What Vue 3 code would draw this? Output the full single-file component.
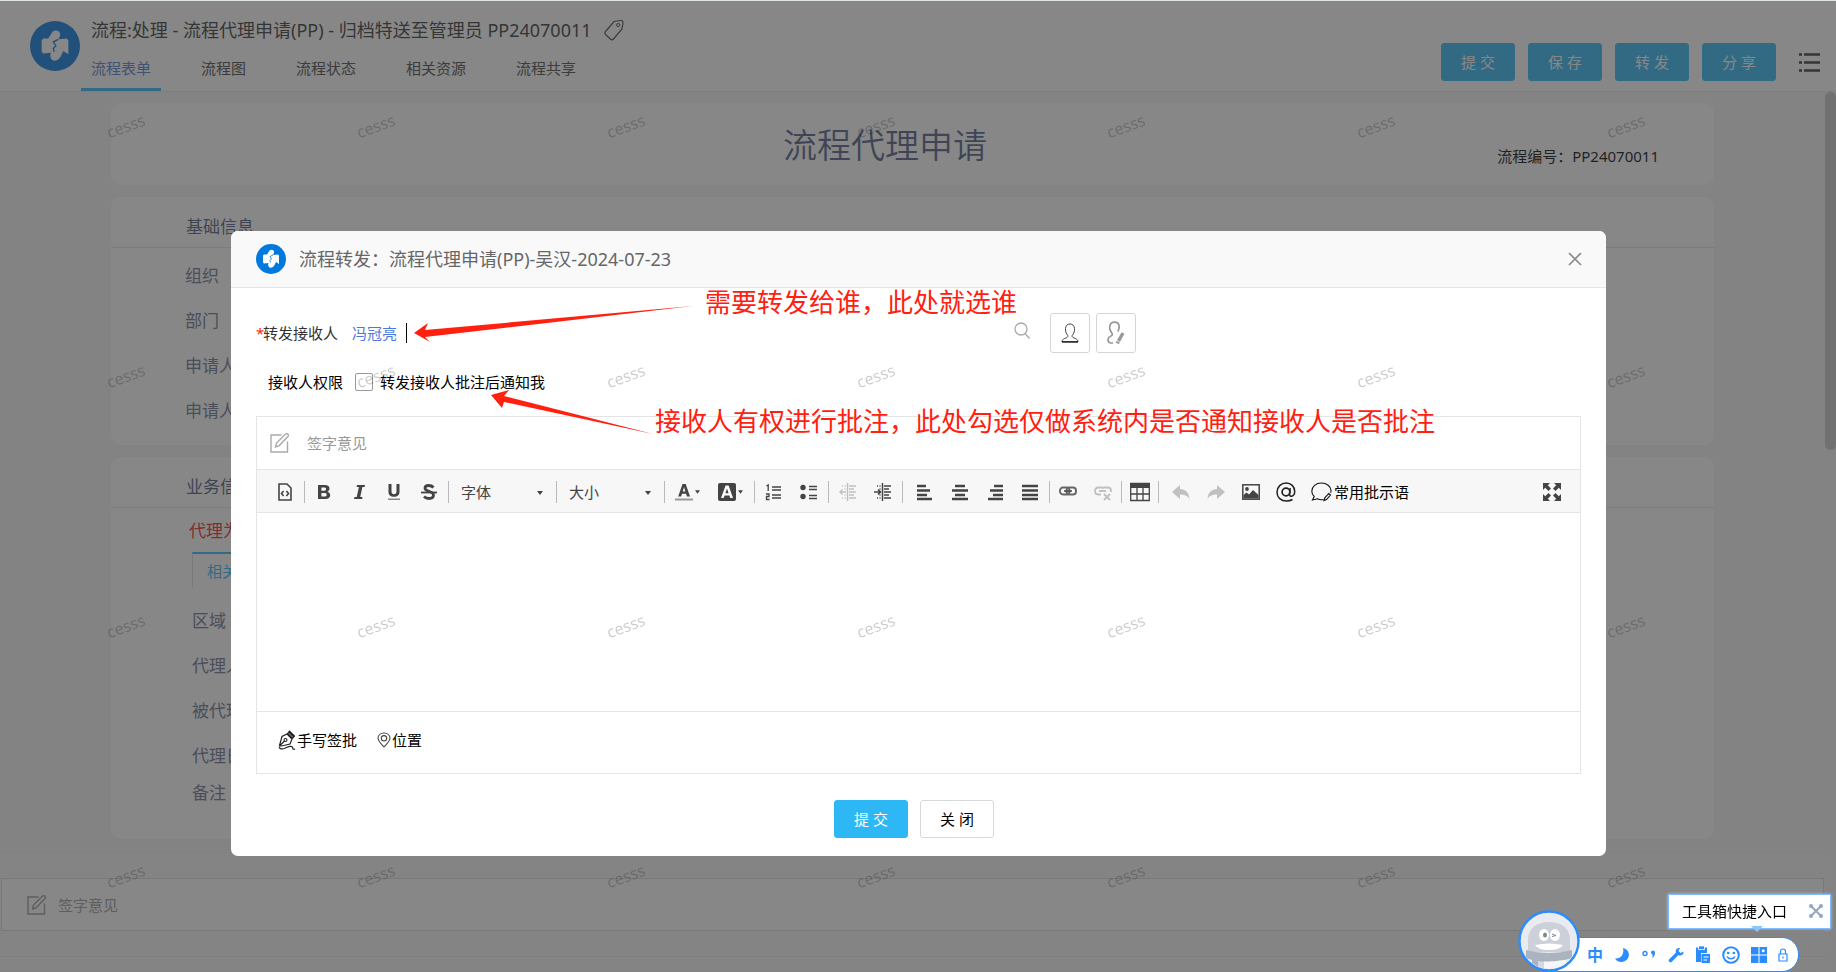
<script setup>
import { ref } from 'vue'

const tabs = ['流程表单', '流程图', '流程状态', '相关资源', '流程共享']
const activeTab = ref('流程表单')
const actions = ['提 交', '保 存', '转 发', '分 享']
const basicFields = ['组织', '部门', '申请人', '申请人']
const businessFields = ['区域', '代理人', '被代理人', '代理日期', '备注']
const notify = ref(false)
const opinion = ref('')
const recipient = ref('')
const watermarks = Array.from({ length: 28 }, (_, i) => i)

const groups = [
  { items: ['source'] },
  { items: ['bold', 'italic', 'underline', 'strike'] },
  { select: '字体' },
  { select: '大小' },
  { items: ['color', 'bgcolor'], drop: true },
  { items: ['ol', 'ul'] },
  { items: ['outdent', 'indent'] },
  { items: ['left', 'center', 'right', 'justify'], wide: true },
  { items: ['link', 'unlink'], tight: true },
  { items: ['table'], tight: true },
  { items: ['undo', 'redo', 'image', 'at'], last: true },
]
const faded = ['outdent', 'unlink', 'undo', 'redo']
const names = {
  source: '源码', bold: '加粗', italic: '倾斜', underline: '下划线', strike: '删除线',
  color: '文本颜色', bgcolor: '背景颜色', ol: '编号列表', ul: '项目列表', outdent: '减少缩进',
  indent: '增加缩进', left: '左对齐', center: '居中', right: '右对齐', justify: '两端对齐',
  link: '超链接', unlink: '取消链接', table: '表格', undo: '撤销', redo: '重做', image: '图像', at: '提到',
}
const icons = {
  source: '<path d="M3 1h8l4 4v12H3z" fill="none" stroke="currentColor" stroke-width="1.6"/><path d="M7.600 8L5.500 10.500l2.100 2.500M10.400 8l2.100 2.500-2.100 2.500" fill="none" stroke="currentColor" stroke-width="1.600"/>',
  bold: '<path fill="currentColor" fill-rule="evenodd" d="M3 2h7c3 0 4.500 1.500 4.500 3.500 0 1.600-.9 2.700-2.200 3.200 1.700.4 2.900 1.600 2.900 3.500 0 2.400-1.800 3.800-4.700 3.800H3zM6.400 4.500v3.200h2.800c1.200 0 1.900-.6 1.900-1.600s-.7-1.600-1.900-1.600zM6.400 10v3.500h3.200c1.300 0 2.100-.6 2.100-1.800S10.900 10 9.600 10z"/>',
  italic: '<path fill="currentColor" d="M7 2h8l-.4 2h-2.200l-2.200 10h2.300l-.4 2H4l.4-2h2.300L8.900 4H6.600z"/>',
  underline: '<path fill="currentColor" d="M3.500 1h3v7.500c0 1.800.9 2.800 2.500 2.800s2.500-1 2.500-2.800V1h3v7.700c0 3.300-2 5.100-5.500 5.100S3.500 12 3.500 8.700z"/><path fill="#888" d="M3 15.500h12V17H3z"/>',
  strike: '<path d="M13.500 4.500C12 2.800 10.500 2.500 8.800 2.500c-2.300 0-3.800 1-3.800 2.800C5 9 13.500 7.500 13.500 12c0 2.200-1.800 3.500-4.500 3.500-2 0-3.700-.6-5-2" fill="none" stroke="currentColor" stroke-width="2.800"/><path fill="currentColor" d="M1 8.600h16v1.800H1z"/>',
  color: '<path fill="currentColor" fill-rule="evenodd" d="M7.500 1h3.200L15 13.500h-3l-.9-2.700H7l-.9 2.700H3.200zM9 4L7.700 8.500h2.700z"/><path fill="#999" d="M0 15.500h18v2H0z"/>',
  bgcolor: '<rect x="0" y="0" width="18" height="18" rx="2" fill="currentColor"/><path fill="#fff" fill-rule="evenodd" d="M7.600 2.500h3L15 15h-2.700l-.9-2.600H6.600L5.700 15H3zM9 5.500l-1.600 4.800h3.200z"/>',
  ol: '<path d="M7 4h9M7 7h9M7 12h9M7 15h9" stroke="currentColor" stroke-width="1.400"/><path d="M1.500 3l1.700-1V8M1 11h3v2.500H1.500V16.500H4.500" fill="none" stroke="currentColor" stroke-width="1.300"/>',
  ul: '<circle cx="3" cy="4.500" r="2.700" fill="currentColor"/><circle cx="3" cy="13.500" r="2.700" fill="currentColor"/><path d="M9 3.500h8M9 6.500h8M9 12.500h8M9 15.500h8" stroke="currentColor" stroke-width="1.400"/>',
  outdent: '<path d="M8.500 0v18" stroke="currentColor" stroke-width="1.500"/><path d="M10 3h7M10 6h5M10 9h7M10 12h5M10 15h7" stroke="currentColor" stroke-width="1.300"/><path d="M3 3h1M5.500 3h1M3 15h1M5.500 15h1M5.500 6h1M5.500 12h1" stroke="currentColor" stroke-width="1.300"/><path d="M7 9H1M3.500 6.500L1 9l2.500 2.500" fill="none" stroke="currentColor" stroke-width="1.400"/>',
  indent: '<path d="M8.500 0v18" stroke="currentColor" stroke-width="1.500"/><path d="M10 3h7M10 6h5M10 9h7M10 12h5M10 15h7" stroke="currentColor" stroke-width="1.500"/><path d="M3 3h1M5.500 3h1M3 15h1M5.500 15h1M5.500 6h1M5.500 12h1" stroke="currentColor" stroke-width="1.300"/><path d="M0 9h6M4 6.500L6.500 9 4 11.500" fill="none" stroke="currentColor" stroke-width="1.600"/>',
  left: '<path d="M1 3h9M1 7.500h13M1 12h10M1 16h15" stroke="currentColor" stroke-width="2.600"/>',
  center: '<path d="M4 3h10M1 7.500h16M4 12h10M1 16h16" stroke="currentColor" stroke-width="2.600"/>',
  right: '<path d="M8 3h9M4 7.500h13M7 12h10M2 16h15" stroke="currentColor" stroke-width="2.600"/>',
  justify: '<path d="M1 3h16M1 7.500h16M1 12h16M1 16h16" stroke="currentColor" stroke-width="2.600"/>',
  link: '<rect x="1" y="4.500" width="9.500" height="7" rx="3" fill="none" stroke="#666" stroke-width="1.900"/><rect x="7.500" y="4.500" width="9.500" height="7" rx="3" fill="none" stroke="#666" stroke-width="1.900"/><path d="M5 8h8" stroke="currentColor" stroke-width="1.500"/>',
  unlink: '<path d="M10 5.500C9.500 4.500 8.500 4.500 7.500 4.500H4C2 4.500 1 6 1 8s1 3.500 3 3.500h3M8 5c.5-.5 1.500-.5 2.500-.5H14c2 0 3 1.500 3 3.500v1M5 8h7" fill="none" stroke="currentColor" stroke-width="1.800"/><path d="M10 11l6 6M16 11l-6 6" stroke="currentColor" stroke-width="2"/>',
  table: '<path d="M-1 0h20v5H-1z" fill="currentColor"/><path d="M-.3.500h18.600v17H-.3zM-.3 11h18.600M6 5v12.500M12 5v12.500" fill="none" stroke="currentColor" stroke-width="1.300"/>',
  undo: '<path fill="currentColor" d="M0 9l8-7v4c5 .3 9 3 9.500 10C15.500 12.500 12 11.500 8 11.500V16z"/>',
  redo: '<path fill="currentColor" d="M18 9l-8-7v4C5 6.300 1 9 .5 16 2.500 12.500 6 11.500 10 11.500V16z"/>',
  image: '<rect x=".8" y="1.800" width="16.400" height="14.400" fill="none" stroke="currentColor" stroke-width="1.500"/><circle cx="5" cy="6" r="1.900" fill="currentColor"/><path fill="currentColor" d="M1.500 15.500v-3.500l3-2.500 2.500 2 4-4.500 5.500 5v3.500z"/>',
  at: '<circle cx="9" cy="9" r="3.900" fill="none" stroke="#222" stroke-width="1.700"/><path d="M13.200 5l-.7 6c0 1.800 1 2.500 2.200 2.200C16.500 12.700 17.700 11 17.700 8.500 17.700 3.500 14 0 9.300 0 4 0 0 4 0 9.200 0 14.500 4 18 9.500 18c2.500 0 4.500-.6 6-1.500" fill="none" stroke="#222" stroke-width="1.500"/>',
}
</script>

<template>
  <div class="page">
    <header class="head">
      <svg class="logo big" viewBox="0 0 30 30" aria-hidden="true">
        <circle cx="15" cy="15" r="15" fill="#0079de" />
        <path fill="#fff" d="M7 11.500l1-1h3l2.500-4q2-1.500 4 0 1.500 1.500-.5 4.500l5-.5 1 1V20l-3-2-2 4q-2 2.500-4.500 1.500-2-1.500-1-4.500l-4.500.5-1-1z" />
        <path d="M17 11l-3 1.500 1.500 2.500-1.500 1.500.5 2" fill="none" stroke="#0079de" stroke-width=".8" />
      </svg>
      <div class="head-main">
        <h1>
          流程:处理 - 流程代理申请(PP) - 归档特送至管理员 PP24070011
          <svg class="tag" viewBox="0 0 20 22" aria-hidden="true">
            <path d="M1.500 12.500L10 2.500 16.500 1.500q2.500-.3 2.500 2L18 10l-8.500 10q-1.300 1.500-2.800.2L1.500 15.500q-1.400-1.400 0-3z" fill="none" stroke="#444" stroke-width="1.200" />
            <circle cx="14.200" cy="6" r="1.600" fill="none" stroke="#444" />
          </svg>
        </h1>
        <nav>
          <a v-for="t in tabs" :key="t" href="#" :class="{ on: t === activeTab }" @click.prevent="activeTab = t">{{ t }}</a>
        </nav>
      </div>
      <div class="head-actions">
        <button v-for="a in actions" :key="a" type="button" class="btn primary">{{ a }}</button>
        <button type="button" class="plain menu" aria-label="更多">
          <svg viewBox="0 0 21 19" width="21" height="19"><path d="M5 1.500h16M5 9.500h16M5 17.500h16" stroke="#333" stroke-width="2.600" /><path d="M0 1.500h3M0 9.500h3M0 17.500h3" stroke="#333" stroke-width="2.600" /></svg>
        </button>
      </div>
    </header>

    <div class="body">
      <div class="content">
        <main>
          <section class="card title-card">
            <h2>流程代理申请</h2>
            <p>流程编号：PP24070011</p>
          </section>
          <section class="card">
            <h3>基础信息</h3>
            <div class="rows basic">
              <div v-for="(f, i) in basicFields" :key="i" class="row">{{ f }}</div>
            </div>
          </section>
          <section class="card">
            <h3>业务信息</h3>
            <p class="warn">代理为</p>
            <div class="subtab">相关</div>
            <div class="rows business">
              <div v-for="f in businessFields" :key="f" class="row">{{ f }}</div>
            </div>
          </section>
        </main>
        <footer class="sign-area">
          <div class="sign">
            <svg viewBox="0 0 19 20" width="19" height="20" aria-hidden="true"><path d="M11.500 2H1v17h16.500V8.500" fill="none" stroke="#999" stroke-width="1.400" /><path d="M5.500 14l1-4L15.500 1q1.500-.8 2.500.3t0 2.200L9 12.800z" fill="none" stroke="#999" stroke-width="1.400" /></svg>
            <span>签字意见</span>
          </div>
        </footer>
      </div>
      <div class="scroll"><i></i></div>
    </div>

    <div class="mask">
      <section class="modal" role="dialog" aria-labelledby="dlg-title">
        <header class="modal-head">
          <svg class="logo" viewBox="0 0 30 30" aria-hidden="true">
            <circle cx="15" cy="15" r="15" fill="#0079de" />
            <path fill="#fff" d="M7 11.500l1-1h3l2.500-4q2-1.500 4 0 1.500 1.500-.5 4.500l5-.5 1 1V20l-3-2-2 4q-2 2.500-4.500 1.500-2-1.500-1-4.500l-4.500.5-1-1z" />
            <path d="M17 11l-3 1.500 1.500 2.500-1.500 1.500.5 2" fill="none" stroke="#0079de" stroke-width=".8" />
          </svg>
          <h2 id="dlg-title">流程转发：流程代理申请(PP)-吴汉-2024-07-23</h2>
          <button type="button" class="plain" aria-label="关闭">
            <svg viewBox="0 0 14 14" width="14" height="14"><path d="M1 1l12 12M13 1L1 13" stroke="#8a8a8a" stroke-width="1.700" /></svg>
          </button>
        </header>

        <div class="modal-body">
          <div class="recipient">
            <label for="rcp"><b>*</b>转发接收人</label>
            <div class="picker">
              <a href="#" @click.prevent>冯冠亮</a>
              <i class="caret"></i>
              <input id="rcp" v-model="recipient" type="text" />
              <svg viewBox="0 0 16 20" width="16" height="20" aria-hidden="true"><circle cx="7" cy="6" r="6" fill="none" stroke="#aaa" stroke-width="1.300" /><path d="M11 10.500l4.500 5" stroke="#aaa" stroke-width="1.300" /></svg>
            </div>
            <button type="button" class="square" aria-label="选择人员">
              <svg viewBox="0 0 18 20" width="18" height="20"><path d="M6.800 12.500C5 10.500 4.300 8 4.500 5.500 4.700 2.500 6.500 1 9 1s4.300 1.500 4.500 4.500c.2 2.500-.5 5-2.300 7-.5 2 1.500 2.300 3.500 3.200 1.500.7 2.300 1.500 2.300 3.300H1c0-1.800.8-2.600 2.300-3.300 2-.9 4-1.200 3.500-3.200z" fill="none" stroke="#444" stroke-width="1" /><path d="M1 18.800h16" stroke="#222" stroke-width="1.400" /></svg>
            </button>
            <button type="button" class="square" aria-label="编辑人员">
              <svg viewBox="0 0 20 24" width="20" height="24"><path d="M7 22H4.500Q2 21.500 2 18.500c0-1.500 1-2.500 2.500-3.200 2-1 2.500-2 1-3.800C4 9.500 3.300 7.500 3.700 5.300 4.200 2.500 6 1.200 8.500 1.200s4.500 1.500 4.700 4.300c.1 2-.5 3.500-1.400 5" fill="none" stroke="#999" stroke-width="1.700" /><path d="M12.500 20l4.500-8M11.500 22.500l.5-2" stroke="#999" stroke-width="3.400" /></svg>
            </button>
          </div>

          <div class="rights">
            <span>接收人权限</span>
            <input id="ntf" v-model="notify" type="checkbox" />
            <label for="ntf">转发接收人批注后通知我</label>
          </div>

          <div class="editor">
            <div class="editor-head">
              <svg viewBox="0 0 19 20" width="19" height="20" aria-hidden="true"><path d="M11.500 2H1v17h16.500V8.500" fill="none" stroke="#aaa" stroke-width="1.400" /><path d="M5.500 14l1-4L15.500 1q1.500-.8 2.500.3t0 2.200L9 12.800z" fill="none" stroke="#aaa" stroke-width="1.400" /></svg>
              <label for="op">签字意见</label>
            </div>
            <div class="toolbar">
              <div v-for="(g, gi) in groups" :key="gi" class="group" :class="{ wide: g.wide, tight: g.tight, last: g.last }">
                <div v-if="g.select" class="sel">
                  <select :aria-label="g.select"><option>{{ g.select }}</option></select>
                  <svg viewBox="0 0 6 4" width="6" height="4" aria-hidden="true"><path d="M0 0h6L3 4z" fill="#444" /></svg>
                </div>
                <template v-else>
                  <button v-for="n in g.items" :key="n" type="button" class="tool" :class="{ drop: g.drop, faded: faded.includes(n) }" :aria-label="names[n]">
                    <svg :viewBox="n === 'at' ? '-1 -1 20 20' : '0 0 18 18'" :width="n === 'at' ? 20 : 18" :height="n === 'at' ? 20 : 18" v-html="icons[n]"></svg>
                    <svg v-if="g.drop" viewBox="0 0 6 4" width="5" height="4"><path d="M0 0h6L3 4z" fill="#444" /></svg>
                  </button>
                </template>
              </div>
              <button type="button" class="phrase">
                <svg viewBox="0 0 21 20" width="21" height="20"><path d="M12.500 17.500c-2 .5-4 .3-6-.7L1.500 18l1.700-3.500C1.500 12.800.8 11 .8 9.300.8 4.500 5 1 10.300 1S20 4.500 20 8.500c0 .8-.1 1.500-.4 2.200" fill="none" stroke="#111" stroke-width="1.100" /><path d="M13 18.500l.8-2.700 4-4.300 1.700 1.500-4 4.500z" fill="none" stroke="#111" stroke-width="1.100" /></svg>
                常用批示语
              </button>
              <button type="button" class="full" aria-label="全屏">
                <svg viewBox="0 0 18 18" width="18" height="18"><path fill="#444" d="M0 0h7L4.800 2.200 8 5.500 5.500 8 2.200 4.800 0 7zM18 0v7l-2.200-2.200L12.500 8 10 5.500l3.200-3.300L11 0zM0 18v-7l2.200 2.200L5.500 10 8 12.500l-3.200 3.300L7 18zM18 18h-7l2.200-2.200-3.200-3.300 2.500-2.500 3.300 3.200L18 11z" /></svg>
              </button>
            </div>
            <textarea id="op" v-model="opinion"></textarea>
            <div class="editor-foot">
              <button type="button">
                <svg viewBox="0 0 18 20" width="18" height="20"><path d="M1.500 15.500L4 6.500 9 4l5 5-2 5-8.500 2z M1.500 16l5-5" fill="none" stroke="#222" stroke-width="1.200" /><circle cx="7.500" cy="10" r="1.500" fill="none" stroke="#222" stroke-width="1.100" /><path d="M9.500 3.500L11.500 1 16.500 6l-2 2.500zM11 2l5 5" fill="#888" stroke="#222" stroke-width="1.100" /><path d="M1.500 16.500c-1 2 2 3 5 2 3-1.200 6-3.500 8-1.500.8.700-.5 1.500.5 2 .8.300 1.500 0 2 .5" fill="none" stroke="#222" stroke-width="1.100" /></svg>
                手写签批
              </button>
              <button type="button">
                <svg viewBox="0 0 14 16" width="14" height="16"><path d="M7 15C4 11.500 1 9 1 6.300 1 3 3.700 1 7 1s6 2 6 5.300C13 9 10 11.500 7 15z" fill="none" stroke="#444" stroke-width="1.100" /><circle cx="7" cy="6.300" r="2.700" fill="none" stroke="#444" stroke-width="1.100" /></svg>
                位置
              </button>
            </div>
          </div>
        </div>

        <div class="modal-foot">
          <button type="button" class="btn primary">提 交</button>
          <button type="button" class="btn">关 闭</button>
        </div>

        <div class="note first">需要转发给谁，此处就选谁</div>
        <div class="note second">接收人有权进行批注，此处勾选仅做系统内是否通知接收人是否批注</div>
        <svg class="arrows" viewBox="0 0 500 220" width="500" height="220" aria-hidden="true">
          <path fill="#ff2010" d="M183 102l14-10-3 7 268-24-268 31 5 5zM260 164l18-5-5 6 149 38-149-32-2 6z" />
        </svg>
      </section>
    </div>

    <div class="marks" aria-hidden="true"><span v-for="m in watermarks" :key="m">cesss</span></div>

    <div class="tip">
      工具箱快捷入口
      <button type="button" class="plain" aria-label="关闭提示">
        <svg viewBox="0 0 14 14" width="14" height="14"><path d="M2 2l10 10M12 2L2 12" stroke="#94a6be" stroke-width="2" /><g fill="#94a6be"><circle cx="2" cy="2" r="2" /><circle cx="12" cy="2" r="2" /><circle cx="2" cy="12" r="2" /><circle cx="12" cy="12" r="2" /></g></svg>
      </button>
      <svg class="beak" viewBox="0 0 12 8" width="12" height="8"><path d="M0 0h12L6 6z" fill="#8cc4ff" /></svg>
    </div>
    <div class="ime">
      <svg class="avatar" viewBox="0 0 62 62" width="62" height="62" aria-hidden="true">
        <defs><clipPath id="face"><circle cx="31" cy="31" r="28" /></clipPath></defs>
        <circle cx="31" cy="31" r="29.500" fill="#e9ebf0" stroke="#2a8cff" stroke-width="2.400" />
        <g clip-path="url(#face)">
          <path d="M10 42V30C10 18 19 12 31 12s21 6 21 18v12z" fill="#ccd0d8" />
          <path d="M15 44h32v18H15z" fill="#d5d8df" />
          <path d="M26 50h22v12H26z" fill="#f5f6f8" />
          <path d="M8 40c14 4 32 4 46 0v8c-14 4-28 4-34 3v10h-6V50l-6-2z" fill="#aab3bf" />
          <ellipse cx="26" cy="25" rx="5" ry="6" fill="#fff" /><ellipse cx="37" cy="25" rx="5" ry="6" fill="#fff" />
          <ellipse cx="27" cy="25" rx="2" ry="2.500" fill="#7f8791" /><path d="M34 24l4 1.500-4 1" fill="none" stroke="#7f8791" />
          <path d="M17 35q14-3 28 0-3 5-14 5t-14-5z" fill="#fff" />
        </g>
      </svg>
      <div class="ime-bar">
        <b>中</b>
        <svg viewBox="0 0 16 16" width="16" height="16"><path d="M9 1c6 1 8 8 3.500 12C9 16 3 15.500 1 11.500 7 12 10.500 7 9 1z" fill="#2a8cff" /></svg>
        <svg viewBox="0 0 16 16" width="16" height="16"><circle cx="4" cy="6.500" r="2" fill="none" stroke="#2a8cff" stroke-width="1.400" /><circle cx="12" cy="5.500" r="2" fill="#2a8cff" /><path d="M14 5.500q0 4-3 5.500 1-2 .5-4z" fill="#2a8cff" /></svg>
        <svg viewBox="0 0 16 16" width="16" height="16"><path d="M2.500 13.500l7-7" stroke="#2a8cff" stroke-width="3.600" stroke-linecap="round" /><path d="M15.500 4.500L12.500 6 10.500 4 12 1C9 .5 7 3 8 5.500L11 8.500C13.500 9 16 7 15.500 4.500z" fill="#2a8cff" /></svg>
        <svg viewBox="0 0 16 18" width="16" height="18"><path d="M1 1.500h11V7H6v9H1z" fill="#2a8cff" /><path d="M3.500 0h6v3.500h-6z" fill="#2a8cff" stroke="#fff" stroke-width=".8" /><path d="M6.500 8H15v9H6.500z" fill="#2a8cff" /><path d="M8.500 11h5M8.500 14h3.500" stroke="#fff" stroke-width="1.200" /></svg>
        <svg viewBox="0 0 18 18" width="18" height="18"><circle cx="9" cy="9" r="7.800" fill="none" stroke="#2a8cff" stroke-width="2" /><circle cx="6.200" cy="7" r="1.300" fill="#2a8cff" /><circle cx="11.800" cy="7" r="1.300" fill="#2a8cff" /><path d="M5 10.500c1.500 3 6.500 3 8 0" fill="none" stroke="#2a8cff" stroke-width="1.600" /></svg>
        <svg viewBox="0 0 16 16" width="16" height="16"><path d="M0 0h7.500v7.500H0zM8.500 0H16v7.500H8.500zM0 8.500h7.500V16H0zM8.500 8.500H16V16H8.500z" fill="#2a8cff" /><circle cx="12.200" cy="3.800" r="1.500" fill="#fff" /></svg>
        <svg viewBox="0 0 10 14" width="10" height="14"><path d="M1 6h8v7H1zM2.500 6V3.500C2.500 1.800 3.500 1 5 1s2.500.8 2.500 2.500V6M5 8.500v2" fill="none" stroke="#2a8cff" stroke-width="1.200" /></svg>
      </div>
    </div>
  </div>
</template>

<style>
body { margin: 0; background: #f5f5f5; }
</style>

<style scoped>
* { box-sizing: border-box; }
.page {
  position: relative; min-height: 100vh; overflow: hidden; display: flex; flex-direction: column;
  background: #f5f5f5; color: #000; font: 400 15px/20px "Noto Sans", "Noto Sans CJK SC", sans-serif;
}
h1, h2, h3, p { margin: 0; font-weight: 400; }
svg { display: block; flex: none; overflow: visible; }
button, input, select, textarea { font: inherit; color: inherit; margin: 0; }
a { text-decoration: none; }
.plain { border: 0; background: none; padding: 0; }
.logo { width: 30px; height: 30px; }
.logo.big { width: 50px; height: 50px; margin-top: 21px; }

.head { display: flex; padding: 0 16px 0 30px; background: #fff; border-bottom: 1px solid #e9e9e9; }
.head-main { padding-top: 15px; }
.head h1 { display: flex; align-items: center; gap: 12px; height: 30px; padding-left: 11px; font-size: 18px; color: #333; }
.tag { width: 20px; height: 22px; }
nav { display: flex; gap: 30px; margin-left: 1px; }
nav a { padding: 13px 10px 10px; border-bottom: 3px solid transparent; color: #444; }
nav a.on { color: #4d7ad8; border-color: #2db7f5; }
.head-actions { display: flex; align-items: center; gap: 13px; margin: 43px 0 10px auto; height: 38px; }
.menu { margin-left: 10px; }
.btn { width: 74px; height: 38px; padding: 0; border: 1px solid #d9d9d9; border-radius: 3px; background: #fff; }
.btn.primary { background: #2db7f5; border-color: #2db7f5; color: #fff; }

.body { display: flex; flex: 1; }
.content { flex: 1; min-width: 0; display: flex; flex-direction: column; }
.scroll { width: 11px; }
.scroll i { display: block; height: 358px; border-radius: 5px; background: #c9c9c9; }
main { display: flex; flex-direction: column; gap: 12px; padding: 11px 111px 13px; }
.card { background: #fff; border-radius: 10px; overflow: hidden; }
.title-card { display: grid; height: 82px; padding-right: 55px; }
.title-card > * { grid-area: 1 / 1; }
.title-card h2 { align-self: center; padding-top: 2px; text-align: center; font-size: 34px; line-height: 48px; font-weight: 350; color: #4d5a85; }
.title-card p { justify-self: end; align-self: end; padding-bottom: 19px; }
.card h3 { padding: 18px 75px 8px; border-bottom: 1px solid #e4e4e4; font-size: 17px; line-height: 24px; color: #4a587c; }
.rows { font-size: 17px; color: #66728f; }
.row { height: 45px; line-height: 45px; }
.basic { padding: 5px 74px 12px; }
.warn { padding: 11px 78px 9px; font-size: 17px; line-height: 24px; color: #f02020; }
.subtab { width: 90px; margin-left: 81px; padding-left: 14px; border-left: 1px solid #dcdcdc; border-top: 2px solid #2db7f5; line-height: 34px; color: #2db7f5; }
.business { padding: 10px 81px 31px; }
.business .row:last-child { height: 30px; line-height: 30px; }
.sign-area { border-top: 1px solid #f1f1f1; padding: 25px 0 0; background: #f7f7f7; flex: 1; }
.sign { display: flex; align-items: center; gap: 12px; height: 53px; margin: 0 1px 25px; padding-left: 25px; border: 1px solid #dcdcdc; background: #fff; color: #999; }
.sign-area::after { content: ""; display: block; border-top: 1px solid #e9e9e9; }

.mask { position: fixed; inset: 0; padding: 230px 230px 0 231px; background: rgba(55, 55, 55, .6); border-top: 1px solid #dfe5e3; }
.modal { position: relative; background: #fff; border-radius: 7px; }
.modal-head { display: flex; align-items: center; height: 57px; padding: 0 24px 0 25px; background: #f9f9f9; border-bottom: 1px solid #e5e5e5; border-radius: 7px 7px 0 0; }
.modal-head h2 { flex: 1; padding-left: 13px; font-size: 18px; line-height: 28px; color: #666; }
.modal-body { padding: 25px 25px 0; }
.recipient { display: flex; align-items: center; height: 40px; color: #333; }
.recipient label { display: flex; }
.recipient b { width: 7px; color: #f22; font-weight: 400; }
.picker { display: flex; align-items: center; flex: 0 1 678px; margin: 0 20px 0 14px; }
.picker a { color: #4878e0; }
.caret { width: 1px; height: 20px; margin-left: 9px; background: #000; }
.picker input { flex: 1; min-width: 0; border: 0; outline: 0; padding: 0; }
.square { display: grid; place-items: center; width: 40px; height: 40px; margin-right: 6px; padding: 0; border: 1px solid #d5d5d5; border-radius: 3px; background: #fff; }
.rights { display: flex; align-items: center; height: 24px; margin-top: 17px; padding-left: 12px; }
.rights input { appearance: none; width: 18px; height: 18px; margin: 0 7px 0 12px; border: 1px solid #999; border-radius: 2px; }
.editor { margin-top: 22px; border: 1px solid #e5e5e5; }
.editor-head { display: flex; align-items: center; gap: 18px; height: 52px; padding-left: 13px; color: #999; }
.toolbar { display: flex; align-items: center; height: 44px; padding: 2px 0 0 9px; background: #f7f7f7; border: solid #e5e5e5; border-width: 1px 0; color: #444; }
.group { display: flex; padding: 0 2px 0 1px; height: 22px; border-right: 1px solid #bbb; }
.group.wide { padding-left: 4px; }
.group.tight { padding: 0 1px 0 0; }
.group.last { border: 0; padding: 0 0 0 4px; }
.tool { display: flex; align-items: center; justify-content: center; width: 35px; height: 22px; padding: 0; border: 0; background: none; }
.tool.drop { gap: 2px; width: 43px; }
.faded { color: #c0c0c0; }
.sel { position: relative; width: 104px; }
.sel select { appearance: none; width: 100%; height: 22px; padding: 0 0 0 11px; border: 0; background: none; }
.sel svg { position: absolute; right: 11px; top: 10px; }
.phrase { display: flex; align-items: center; gap: 2px; padding: 0 0 0 8px; border: 0; background: none; color: #000; }
.full { margin-left: auto; padding: 0 19px 0 0; border: 0; background: none; }
textarea { display: block; width: 100%; height: 198px; border: 0; outline: 0; padding: 12px; resize: none; background: none; }
.editor-foot { display: flex; gap: 20px; height: 62px; padding: 0 0 6px 21px; border-top: 1px solid #e5e5e5; }
.editor-foot button { display: flex; align-items: center; gap: 1px; padding: 0; border: 0; background: none; }
.modal-foot { display: flex; justify-content: center; gap: 12px; padding: 26px 9px 18px 0; }

.note { position: absolute; font-size: 26px; line-height: 36px; font-weight: 400; color: #ff2010; white-space: nowrap; }
.first { left: 474px; top: 53px; }
.second { left: 424px; top: 172px; }
.arrows { position: absolute; left: 0; top: 0; pointer-events: none; }

.marks { position: fixed; left: 106px; top: 116px; display: grid; grid-template-columns: repeat(7, 250px); grid-auto-rows: 250px; pointer-events: none; }
.marks span { justify-self: start; align-self: start; font-size: 16px; color: rgba(0, 0, 0, .2); transform: rotate(-20deg); }

.tip { position: fixed; right: 5px; bottom: 43px; display: flex; align-items: center; gap: 22px; height: 35px; padding: 0 7px 2px 13px; border: 1px solid #7dbcff; background: #fff; box-shadow: 0 0 3px rgba(255, 255, 255, .5); }
.beak { position: absolute; left: 82px; top: 31px; }
.ime { position: fixed; right: 37px; bottom: 0; display: flex; align-items: flex-end; }
.avatar { position: relative; z-index: 1; }
.ime-bar { display: flex; align-items: center; gap: 11px; height: 35px; margin-left: -23px; padding: 0 10px 0 29px; border: 1px solid #2a8cff; border-radius: 0 17px 17px 0; background: #fff; }
.ime-bar b { font-size: 16px; font-weight: 700; color: #2a8cff; }
</style>
